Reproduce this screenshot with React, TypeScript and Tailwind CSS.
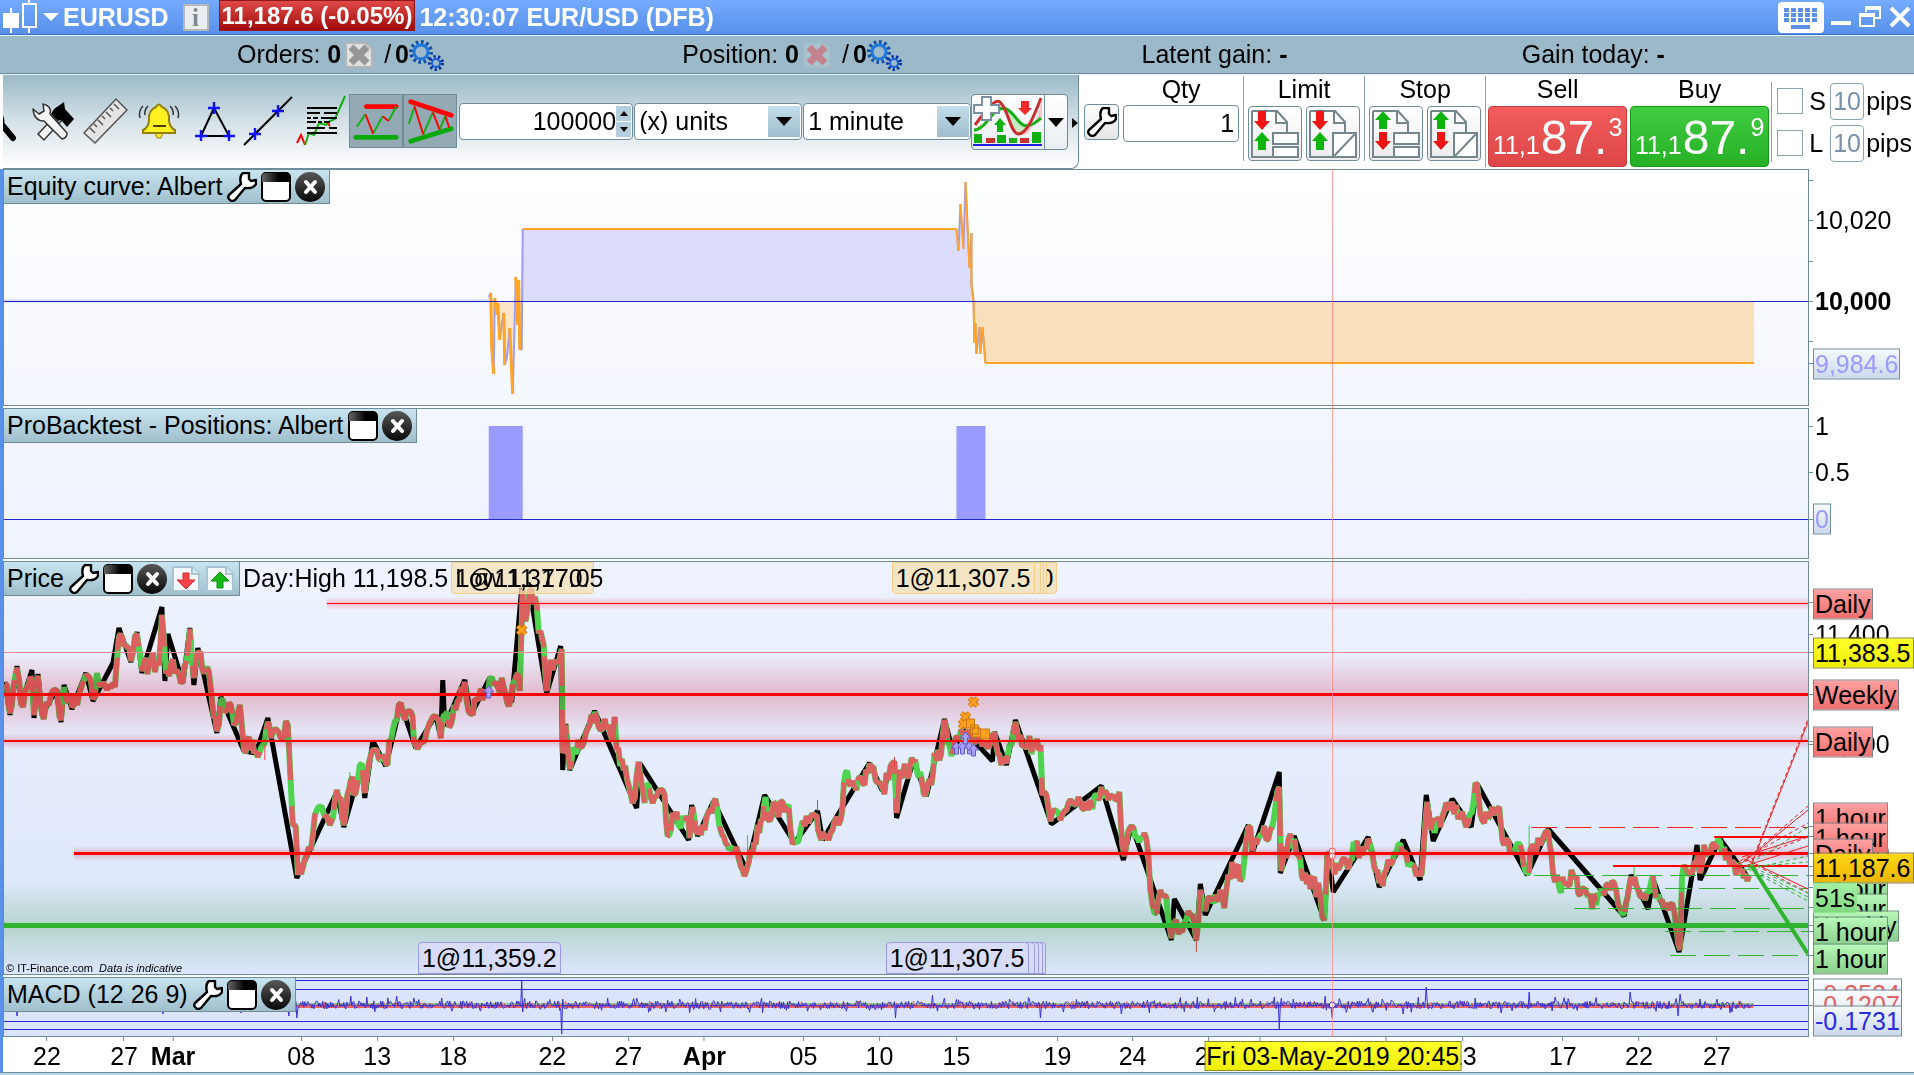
import React, { useState } from 'react';
import clsx from 'clsx';

type Point = [number, number];

// All panes share one horizontal scale: 3 is the left edge of the plot, 1808 the right one.
const PLOT_LEFT = 3;
const PLOT_WIDTH = 1805;

const pct = (x: number) => `${((x - PLOT_LEFT) / PLOT_WIDTH) * 100}%`;
const toPath = (points: Point[]) => 'M' + points.map(([x, y]) => `${x} ${y}`).join('L');

const zigzag: Point[] = [
  [4, 127], [9, 160], [16, 111], [20, 150], [31, 115], [33, 163], [37, 119], [41, 160], [55, 135], [60, 167],
  [63, 130], [71, 154], [85, 118], [92, 146], [112, 108], [118, 73], [130, 107], [136, 77], [141, 118], [161, 52],
  [164, 126], [167, 79], [182, 128], [189, 73], [193, 130], [197, 93], [216, 178], [220, 142], [243, 196], [255, 198],
  [267, 163], [296, 323], [336, 237], [343, 272], [361, 209], [364, 243], [372, 186], [385, 211], [400, 149], [415, 193],
  [435, 160], [440, 183], [442, 125], [444, 171], [464, 125], [470, 160], [489, 123], [511, 147], [521, 33], [524, 66],
  [529, 35], [546, 138], [560, 91], [562, 215], [565, 169], [569, 215], [594, 156], [636, 253], [639, 208], [688, 285],
  [691, 250], [697, 281], [713, 246], [746, 315], [764, 240], [794, 288], [817, 256], [822, 285], [869, 208], [882, 236],
  [894, 206], [896, 263], [913, 205], [926, 241], [944, 164], [952, 195], [964, 175], [992, 206], [994, 177], [1006, 210],
  [1015, 165], [1051, 269], [1101, 231], [1123, 305], [1131, 270], [1171, 385], [1174, 344], [1196, 385], [1200, 329], [1205, 360],
  [1248, 270], [1252, 298], [1279, 217], [1280, 318], [1294, 281], [1324, 365], [1328, 297], [1333, 337], [1368, 282], [1379, 332],
  [1403, 285], [1420, 325], [1426, 240], [1433, 286], [1452, 244], [1471, 272], [1477, 229], [1527, 320], [1548, 274], [1624, 361],
  [1631, 320], [1648, 354], [1653, 324], [1679, 397], [1697, 290], [1700, 325], [1720, 284], [1749, 324],
];

const prices: Point[] = [
  [4, 129], [9, 158], [16, 113], [20, 148], [26, 132], [31, 125], [33, 160], [37, 121], [41, 158], [48, 150],
  [55, 135], [60, 165], [63, 132], [71, 152], [78, 140], [85, 120], [92, 144], [96, 118], [102, 128], [108, 130],
  [114, 132], [118, 82], [125, 90], [130, 106], [136, 79], [141, 116], [150, 105], [158, 110], [161, 60], [165, 118],
  [170, 108], [182, 126], [185, 108], [189, 74], [193, 123], [198, 98], [203, 118], [208, 117], [213, 163], [216, 176],
  [220, 145], [226, 155], [230, 150], [235, 168], [239, 150], [243, 194], [248, 182], [255, 196], [262, 190], [267, 167],
  [270, 183], [276, 175], [281, 183], [287, 170], [289, 210], [292, 270], [295, 272], [297, 320], [302, 313], [306, 300],
  [312, 280], [316, 255], [319, 252], [324, 262], [329, 270], [334, 245], [340, 243], [343, 270], [350, 225], [355, 238],
  [361, 209], [364, 238], [370, 200], [374, 195], [380, 205], [385, 208], [392, 175], [398, 150], [404, 165], [410, 157],
  [415, 190], [424, 186], [432, 162], [438, 165], [440, 183], [443, 160], [450, 170], [455, 155], [464, 127], [470, 158],
  [476, 145], [484, 135], [489, 124], [495, 127], [503, 132], [510, 145], [516, 120], [519, 136], [522, 35], [525, 66],
  [529, 37], [536, 50], [538, 78], [543, 90], [546, 136], [550, 105], [557, 108], [561, 94], [562, 198], [565, 170],
  [569, 214], [574, 195], [583, 188], [589, 170], [594, 157], [600, 175], [608, 170], [612, 186], [614, 162], [616, 195],
  [623, 215], [628, 230], [634, 243], [636, 220], [638, 207], [642, 235], [644, 248], [648, 230], [652, 248], [660, 235],
  [664, 240], [667, 281], [672, 258], [678, 270], [686, 262], [689, 283], [692, 252], [697, 278], [702, 270], [706, 262],
  [713, 247], [720, 275], [725, 288], [732, 293], [738, 303], [746, 315], [752, 298], [757, 270], [762, 265], [765, 242],
  [769, 266], [773, 247], [778, 262], [782, 247], [788, 250], [790, 275], [794, 286], [800, 275], [808, 268], [816, 260],
  [819, 280], [824, 283], [830, 278], [836, 262], [840, 265], [845, 218], [850, 230], [856, 235], [860, 222], [864, 230],
  [869, 209], [875, 225], [882, 233], [888, 225], [894, 207], [896, 258], [899, 215], [906, 220], [913, 207], [918, 222],
  [925, 240], [931, 230], [934, 198], [939, 205], [944, 165], [949, 190], [953, 193], [957, 182], [964, 177], [972, 185],
  [980, 185], [988, 193], [994, 178], [999, 200], [1006, 208], [1011, 190], [1015, 167], [1020, 180], [1025, 192], [1033, 190],
  [1040, 190], [1042, 240], [1046, 240], [1050, 266], [1058, 258], [1068, 248], [1080, 247], [1088, 255], [1096, 240], [1101, 232],
  [1108, 245], [1113, 240], [1119, 237], [1122, 290], [1124, 301], [1131, 272], [1137, 282], [1144, 278], [1148, 300], [1150, 335],
  [1154, 358], [1158, 345], [1166, 342], [1171, 383], [1176, 365], [1180, 375], [1190, 360], [1196, 385], [1200, 335], [1205, 356],
  [1213, 348], [1220, 335], [1224, 353], [1228, 320], [1236, 312], [1242, 323], [1246, 285], [1250, 272], [1252, 296], [1260, 280],
  [1270, 275], [1279, 232], [1281, 316], [1288, 285], [1294, 284], [1300, 305], [1303, 325], [1312, 325], [1320, 340], [1324, 365],
  [1327, 297], [1331, 305], [1338, 315], [1350, 305], [1355, 290], [1362, 300], [1368, 284], [1374, 312], [1379, 328], [1386, 315],
  [1398, 290], [1406, 300], [1412, 310], [1420, 320], [1423, 300], [1427, 247], [1431, 275], [1436, 270], [1442, 262], [1452, 247],
  [1460, 260], [1468, 268], [1477, 230], [1482, 265], [1490, 260], [1499, 252], [1504, 290], [1512, 295], [1520, 290], [1527, 318],
  [1532, 290], [1540, 290], [1548, 277], [1553, 320], [1559, 332], [1566, 328], [1573, 320], [1580, 340], [1588, 342], [1596, 350],
  [1606, 330], [1616, 335], [1624, 358], [1631, 322], [1638, 335], [1645, 345], [1651, 327], [1658, 340], [1666, 348], [1674, 355],
  [1680, 395], [1682, 320], [1690, 318], [1698, 300], [1700, 318], [1704, 290], [1712, 290], [1720, 287], [1726, 305], [1734, 308],
  [1742, 315], [1749, 321],
];

const firstTrade: Point[] = [
  [488, 297], [490, 293], [491, 348], [493, 374], [494, 298], [496, 315], [497, 303], [499, 340], [501, 325], [503, 313],
  [504, 365], [506, 358], [508, 340], [509, 328], [512, 394], [514, 320], [515, 277], [517, 325], [518, 280], [519, 349],
  [521, 349], [522, 229],
];

const secondTrade: Point[] = [
  [956, 229], [958, 251], [960, 204], [963, 249], [965, 182], [969, 268], [971, 233], [971, 285], [973, 300], [974, 343],
  [975, 323], [976, 354], [979, 327], [980, 354], [982, 327], [985, 363],
];

// Losing stretches of an equity curve (y grows downwards)
const fallingPath = (points: Point[]) =>
  points
    .slice(1)
    .map(([x, y], i) => (y >= points[i][1] ? `M${points[i][0]} ${points[i][1]}L${x} ${y}` : ''))
    .join('');

// Bars of the MACD that stand out from the noise: x, and the height they reach
const macdSpikes: Record<number, number> = {
  16: 1016, 162: 1014, 240: 1013, 288: 1016, 296: 1018, 350: 996, 366: 997, 396: 996, 441: 998, 521: 981, 522: 1012, 561: 1034,
  562: 999, 636: 998, 665: 1012, 720: 1012, 761: 998, 820: 1010, 895: 1018, 932: 995, 944: 998, 1009: 999, 1040: 1018, 1121: 1014, 1149: 1013,
  1197: 997, 1242: 999, 1279: 1029, 1274: 997, 1293: 999, 1325: 996, 1332: 1018, 1372: 1012, 1382: 999, 1403: 1014, 1426: 987, 1475: 998,
  1501: 1013, 1529: 992, 1552: 1011, 1630: 992, 1678: 1016, 1680: 994, 1700: 999,
};

const createRandom = (seed: number) => () => {
  seed = (seed * 16807) % 2147483647;
  return seed / 2147483647;
};

const buildPricePath = () => {
  const random = createRandom(42);
  const out: Point[] = [prices[0]];
  for (let i = 1; i < prices.length; i++) {
    const [x0, y0] = prices[i - 1];
    const [x1, y1] = prices[i];
    const steps = Math.max(1, Math.round((x1 - x0) / 2));
    for (let s = 1; s < steps; s++) {
      const k = s / steps;
      out.push([x0 + (x1 - x0) * k, Math.round(y0 + (y1 - y0) * k + (random() - 0.5) * 20)]);
    }
    out.push([x1, y1]);
  }
  return toPath(out);
};

const buildMacdPath = (seed: number, size: number, spikes: Record<number, number>) => {
  const random = createRandom(seed);
  const out: Point[] = [];
  for (let x = 4; x <= 1753; x++) {
    const burst = random() > 0.88 ? 2 : 1;
    out.push([x, spikes[x] ?? Math.round((1005 + (random() - 0.5) * size * burst) * 10) / 10]);
  }
  return toPath(out);
};

const pricePath = buildPricePath();
const macdPath = buildMacdPath(7, 8, macdSpikes);
const signalPath = buildMacdPath(19, 4, {});

/* ---------- Icons ---------- */

const WrenchIcon = () => (
  <svg viewBox="0 0 30 30" className="size-[30px] shrink-0">
    <path d="M2 23L14 12Q12 4 16 1H22V7L24 9L29 8V12Q26 17 18 16L8 28Q5 30 3 28Q0 26 2 23Z" fill="#fff" stroke="#000" strokeWidth="2.4" strokeLinejoin="round" />
  </svg>
);

const WindowIcon = () => (
  <svg viewBox="0 0 30 30" className="size-[30px] shrink-0">
    <rect x="1" y="1" width="28" height="28" rx="4" fill="#fff" stroke="#000" strokeWidth="2" />
    <path d="M1 10V5Q1 1 5 1H25Q29 1 29 5V10Z" fill="url(#capFill)" />
  </svg>
);

const CloseIcon = () => (
  <svg viewBox="0 0 30 30" className="size-[30px] shrink-0">
    <circle cx="15" cy="15" r="15" fill="url(#closeFill)" />
    <path d="M11 10L20 20M20 10L11 20" stroke="#fff" strokeWidth="4" strokeLinecap="round" />
  </svg>
);

const PageArrowIcon = ({ up }: { up?: boolean }) => (
  <svg viewBox="0 0 30 28" className="h-7 w-[30px]">
    <path d="M2 2H21L28 9V26H2Z" fill="#f4fafc" stroke="#a9c4d4" strokeWidth="2" />
    <path d="M21 2V9H28" fill="#dcecf5" stroke="#a9c4d4" strokeWidth="2" />
    {up
      ? <path d="M15 7L24 16H18V23H12V16H6Z" fill="#16b816" stroke="#0a900a" />
      : <path d="M15 24L24 15H18V8H12V15H6Z" fill="#f4434b" stroke="#d82c34" />}
  </svg>
);

const GearsIcon = () => (
  <svg viewBox="0 0 36 32" className="h-8 w-9">
    <circle cx="12" cy="13" r="10" fill="none" stroke="#1450a8" strokeWidth="4" strokeDasharray="2.6 2.6" />
    <circle cx="12" cy="13" r="7" fill="none" stroke="#1f78dc" strokeWidth="3" />
    <circle cx="27" cy="24" r="6" fill="none" stroke="#0a2ea0" strokeWidth="4" strokeDasharray="2.1 2.1" />
    <circle cx="27" cy="24" r="4" fill="none" stroke="#1c62d6" strokeWidth="2" />
  </svg>
);

const DeletePageIcon = ({ red }: { red?: boolean }) => (
  <svg viewBox="0 0 28 28" className={clsx('size-7', red && 'opacity-60')}>
    <path d="M1 2H20L27 8V26H1Z" fill={red ? '#b4cbd8' : '#dfe0e1'} stroke={red ? '#a5bfce' : '#b4b4b4'} strokeWidth="2" />
    <path d="M6 6L22 22M22 6L6 22" stroke={red ? '#dc6068' : '#969696'} strokeWidth="7" />
  </svg>
);

const CandlesIcon = () => (
  <svg viewBox="0 0 36 34" className="h-[34px] w-9">
    <path d="M8 8V33M26 0V4M26 27V33" stroke="#fff" strokeWidth="2" />
    <rect x="0" y="13" width="16" height="15" fill="#fff" />
    <rect x="20" y="4" width="13" height="23" fill="none" stroke="#fff" strokeWidth="2" />
  </svg>
);

const ZoomIcon = () => (
  <svg viewBox="0 0 16 52" className="h-[52px] w-4">
    <path d="M0 20Q3 28 0 32" fill="#000" />
    <path d="M0 31L10 43" stroke="#000" strokeWidth="6" strokeLinecap="round" />
  </svg>
);

const ToolsIcon = () => (
  <svg viewBox="0 0 44 42" className="h-[42px] w-11">
    <path d="M7 34L25 15L31 20L13 40Z" fill="#f4f4f4" stroke="#333" strokeWidth="1.5" />
    <path d="M16 25L23 17L29 23L22 31Z" fill="#555" />
    <path d="M23 9L33 2L34 9L43 19L36 27L30 20L27 21L20 14Z" fill="#000" />
    <path d="M2 9L8 14L13 11L12 4Q21 6 19 14L36 33Q36 38 31 39L13 21Q3 21 2 9Z" fill="#f4f4f4" stroke="#333" strokeWidth="1.5" strokeLinejoin="round" />
  </svg>
);

const RulerIcon = () => (
  <svg viewBox="0 0 46 46" className="size-[46px]">
    <path d="M1 35L33 1L44 12L12 45Z" fill="#e4e4e4" stroke="#555" strokeWidth="1.5" strokeLinejoin="round" />
    <path d="M7 30L12 35M11 26L14 29M15 22L20 27M19 18L22 21M23 14L28 19M27 10L30 13M31 6L36 11" stroke="#555" strokeWidth="1.5" />
  </svg>
);

const BellIcon = () => (
  <svg viewBox="0 0 44 38" className="h-[38px] w-11">
    <path d="M6 4Q1 9 3 16M11 4Q7 8 8 13M38 4Q43 9 41 16M33 4Q37 8 36 13" fill="none" stroke="#333" strokeWidth="1.5" />
    <path d="M18 31H26L24 36H20Z" fill="#fce83a" stroke="#a08800" />
    <path d="M19 5Q22 0 25 5Q33 8 32 19Q33 26 38 28V31H6V28Q11 26 12 19Q11 8 19 5Z" fill="#fff024" stroke="#93800a" strokeWidth="2" />
    <path d="M16 24H29" stroke="#4a4000" strokeWidth="2" />
  </svg>
);

const TriangleIcon = () => (
  <svg viewBox="0 0 40 40" className="size-10">
    <path d="M19 7L6 35H34Z" fill="none" stroke="#000" strokeWidth="2" />
    <path d="M13 7H25M19 1V13M0 35H12M6 29V40M28 35H40M34 29V40" stroke="#1010ff" strokeWidth="2.4" />
  </svg>
);

const LineIcon = () => (
  <svg viewBox="0 0 50 52" className="h-[52px] w-[50px]">
    <path d="M1 50L49 2" stroke="#000" strokeWidth="2" />
    <path d="M29 16H41M35 10V22M6 39H18M12 33V45" stroke="#1010ff" strokeWidth="2.4" />
  </svg>
);

const ProfileIcon = () => (
  <svg viewBox="0 0 50 52" className="h-[52px] w-[50px]">
    <path d="M1 48L5 40L9 50" fill="none" stroke="#f00" strokeWidth="2" />
    <path d="M9 50L13 38L18 40L23 28L30 30L34 26L39 24L49 1" fill="none" stroke="#12b012" strokeWidth="2" />
    <path d="M30 26L34 31" stroke="#f00" strokeWidth="2" />
    <path d="M11 13H41M11 38H41" stroke="#000" strokeWidth="2" />
    <path d="M11 18H24M28 18H41M11 23H15M17 23H22M25 23H41M11 27H20M22 27H26M28 27H34M11 33H29M33 33H41" stroke="#000" strokeWidth="2" />
  </svg>
);

const HorizontalLinesIcon = () => (
  <svg viewBox="0 0 54 54" className="h-[52px] w-[52px]">
    <path d="M17 12H48" stroke="#f00" strokeWidth="5" strokeLinecap="round" />
    <path d="M6 44H48" stroke="#0aa80a" strokeWidth="5" strokeLinecap="round" />
    <path d="M7 33L16 20M24 40L34 22M40 27L48 12" stroke="#10b010" strokeWidth="2" />
    <path d="M16 20L24 40M34 22L40 27" stroke="#f00" strokeWidth="2" />
  </svg>
);

const TrendLinesIcon = () => (
  <svg viewBox="0 0 54 54" className="h-[52px] w-[52px]">
    <path d="M7 7L49 21" stroke="#f00" strokeWidth="5" strokeLinecap="round" />
    <path d="M7 48L49 35" stroke="#0aa80a" strokeWidth="5" strokeLinecap="round" />
    <path d="M5 30L11 12M20 41L30 18M37 36L43 22" stroke="#10b010" strokeWidth="2" />
    <path d="M11 12L20 41M30 18L37 36M43 22L47 34" stroke="#f00" strokeWidth="2" />
  </svg>
);

const IndicatorIcon = () => (
  <svg viewBox="0 0 70 52" className="h-[52px] w-[70px]">
    <path d="M1 34C16 34 20 4 33 13C46 22 45 42 69 24L69 3C60 42 47 50 39 24C30 -4 24 10 14 24Z" fill="#f8c8c8" />
    <path d="M33 13C42 18 45 32 54 30C48 42 42 38 33 13Z" fill="#c4ecc4" />
    <path d="M1 34C14 34 20 8 33 13C46 18 46 42 68 22" fill="none" stroke="#12b012" strokeWidth="3" />
    <path d="M2 29C13 14 22 2 27 6C36 15 37 36 45 38C54 38 61 20 68 2" fill="none" stroke="#c83030" strokeWidth="3" />
    <path d="M9 1H18V9H26V17H18V24H9V17H1V9H9Z" fill="#fff" stroke="#7890a0" strokeWidth="2" />
    <path d="M27 22L33 29H30V36H24V29H21Z" fill="#10b010" />
    <path d="M48 5H56V12H59L52 19L45 12H48Z" fill="#f02a2a" />
    <path d="M1 38H9V47H1ZM24 39H33V47H24ZM36 42H44V47H36ZM59 36H68V47H59Z" fill="#10b010" />
    <path d="M13 42H22V47H13ZM47 42H56V47H47Z" fill="#c83030" />
    <path d="M0 49H69" stroke="#2020e0" strokeWidth="2" />
  </svg>
);

const OrderIcon = ({ redFirst, slash }: { redFirst?: boolean; slash?: boolean }) => (
  <svg viewBox="0 0 50 52" className="h-[52px] w-[50px]">
    <path d="M2 3H27L37 14V27M24 49H2V3M26 3V15H37" fill="none" stroke="#75868c" strokeWidth="2" />
    {redFirst ? (
      <>
        <path d="M8 3H16V13H20L12 22L4 13H8Z" fill="#f01414" />
        <path d="M12 24L20 33H16V42H8V33H4Z" fill="#0cb40c" />
      </>
    ) : (
      <>
        <path d="M12 3L20 12H16V21H8V12H4Z" fill="#0cb40c" />
        <path d="M8 24H16V33H20L12 42L4 33H8Z" fill="#f01414" />
      </>
    )}
    {slash
      ? <path d="M25 25H48V49H25ZM26 48L47 26" fill="#fff" stroke="#75868c" strokeWidth="2" />
      : <path d="M23 25H48V36H23ZM23 39H48V49H23Z" fill="#fff" stroke="#75868c" strokeWidth="2" />}
  </svg>
);

// Gradients used by the icons above
const IconDefs = () => (
  <svg className="absolute size-0" aria-hidden="true">
    <defs>
      <linearGradient id="capFill">
        <stop offset="0" stopColor="#666" />
        <stop offset="0.6" stopColor="#000" />
      </linearGradient>
      <linearGradient id="closeFill" x1="0" y1="0" x2="0" y2="1">
        <stop offset="0" stopColor="#585858" />
        <stop offset="1" stopColor="#080808" />
      </linearGradient>
    </defs>
  </svg>
);

/* ---------- Shared pieces ---------- */

interface PaneHeaderProps {
  title: string;
  settings?: boolean;
  children?: React.ReactNode;
}

const PaneHeader: React.FC<PaneHeaderProps> = ({ title, settings, children }) => (
  <div className="absolute left-0 top-0 z-10 flex h-[34px] items-center gap-1 border-b border-r border-[#6f8d99] bg-gradient-to-b from-[#c8e4f0] to-[#a0bfcc] pl-[3px] pr-1">
    <h2 className="mr-px whitespace-nowrap">{title}</h2>
    {settings && <button aria-label={`${title} settings`}><WrenchIcon /></button>}
    <button aria-label={`Maximise ${title}`}><WindowIcon /></button>
    <button aria-label={`Close ${title}`}><CloseIcon /></button>
    {children}
  </div>
);

type Tone = 'plain' | 'bold' | 'red' | 'green' | 'timer' | 'yellow' | 'orange' | 'lilac' | 'blue' | 'rose';

interface AxisLabel {
  text: string;
  y: number;
  tone: Tone;
}

const toneClasses: Record<Tone, string> = {
  plain: 'border-transparent',
  bold: 'border-transparent font-bold',
  red: 'border-[#8a8088] bg-gradient-to-b from-[#ffa0a0] to-[#f07070]',
  green: 'border-[#6f9480] bg-gradient-to-b from-[#b8f8b8] to-[#8acc8a]',
  timer: 'border-transparent bg-gradient-to-b from-[#a4f0a4] to-[#80d880]',
  yellow: 'right-0 border-[#8a8a30] bg-gradient-to-b from-[#ffff28] to-[#eeee00]',
  orange: 'right-0 border-[#8a7a50] bg-gradient-to-b from-[#ffd818] to-[#ecb400]',
  lilac: 'border-[#6f8d99] bg-gradient-to-b from-[#f4fafc] to-[#ccd8ec] text-[#9a9aff]',
  blue: 'border-[#6f8d99] bg-gradient-to-b from-[#f4fafc] to-[#ccd8ec] text-[#2b2be0]',
  rose: 'border-[#6f8d99] bg-gradient-to-b from-[#fbfdfe] to-[#dde6f2] text-[#e06464]',
};

// y is the middle of the label, counted from the top of its pane
const PriceAxis = ({ labels, ticks }: { labels: AxisLabel[]; ticks: number[] }) => (
  <div className="relative w-[105px] shrink-0">
    {ticks.map((y) => (
      <span key={y} className="absolute left-0 h-px w-1 bg-[#6f8d99]" style={{ top: y }} />
    ))}
    {labels.map((label, i) => (
      <span
        key={i}
        className={clsx('absolute left-1 flex h-[31px] -translate-y-1/2 items-center whitespace-nowrap border px-px', toneClasses[label.tone])}
        style={{ top: label.y }}
      >
        {label.text}
      </span>
    ))}
  </div>
);

const tagTones = {
  exit: 'top-0 rounded-b border-[#f3cf85] bg-[#f3e5c4]',
  blend: 'top-0 rounded-b border-[#f3cf85] bg-[#f3dfb0]/70',
  entry: 'bottom-0 rounded-t border-[#9a9ae8] bg-[#d8dcf8]',
};

const TradeTag = ({ x, text, tone }: { x: number; text: string; tone: keyof typeof tagTones }) => (
  <span
    className={clsx('absolute flex h-8 w-[143px] items-center justify-center border', tagTones[tone])}
    style={{ left: pct(x) }}
  >
    {text}
  </span>
);

/* ---------- Top bars ---------- */

const TitleBar = () => (
  <header className="flex h-[35px] items-center border-b border-[#3a6fd4] bg-gradient-to-b from-[#74aaff] to-[#5890ea] font-bold text-white">
    <button aria-label="Instrument" className="flex items-center gap-1 pl-[3px]">
      <CandlesIcon />
      <svg viewBox="0 0 16 8" className="h-2 w-4"><path d="M0 0H16L8 8Z" fill="#fff" /></svg>
      <span>EURUSD</span>
    </button>
    <button aria-label="Information" className="ml-[14px] flex h-[27px] w-[26px] items-center justify-center border-2 border-[#b8b8b8] bg-[#e8eef2] font-['Liberation_Serif',serif] text-[#808890]">
      i
    </button>
    <span className="ml-[10px] flex h-[31px] items-center self-start border border-[#901818] bg-gradient-to-b from-[#e04848] to-[#a00404] px-[2px] text-2xl leading-none">
      11,187.6 (-0.05%)
    </span>
    <span className="ml-1">12:30:07 EUR/USD (DFB)</span>

    {/* Window controls */}
    <div className="ml-auto flex items-center gap-[6px] pr-[2px]">
      <button aria-label="Keyboard">
        <svg viewBox="0 0 46 31" className="h-[31px] w-[46px]">
          <rect width="46" height="31" rx="4" fill="#fff" />
          <path d="M6 8H39M6 13H39M6 18H39" stroke="#5a90e8" strokeWidth="4" strokeDasharray="5 2" />
          <path d="M13 25H32" stroke="#5a90e8" strokeWidth="4" />
        </svg>
      </button>
      <button aria-label="Minimise">
        <svg viewBox="0 0 22 24" className="h-6 w-[22px]"><path d="M1 18H21" stroke="#fff" strokeWidth="4" /></svg>
      </button>
      <button aria-label="Restore">
        <svg viewBox="0 0 24 24" className="size-6">
          <path d="M8 7V2H22V13H17M2 9H16V21H2Z" fill="none" stroke="#fff" strokeWidth="2" />
          <path d="M2 10H16M8 3H22" stroke="#fff" strokeWidth="4" />
        </svg>
      </button>
      <button aria-label="Close">
        <svg viewBox="0 0 24 24" className="size-6"><path d="M3 3L21 21M21 3L3 21" stroke="#fff" strokeWidth="4" /></svg>
      </button>
    </div>
  </header>
);

const StatusBar = () => (
  <div className="grid h-[39px] grid-cols-[445fr_459fr_380fr_392fr] items-center border-b border-t border-b-[#6f8d99] border-t-[#e4f2fa] bg-[#9bb9c8] pl-[237px]">
    <div className="flex items-center">
      Orders:&nbsp;<b>0</b>
      <button aria-label="Cancel orders" className="mx-1"><DeletePageIcon /></button>
      &nbsp;/<b className="ml-1">0</b>
      <button aria-label="Order systems"><GearsIcon /></button>
    </div>
    <div className="flex items-center">
      Position:&nbsp;<b>0</b>
      <button aria-label="Close position" className="mx-1"><DeletePageIcon red /></button>
      &nbsp;/<b className="ml-1">0</b>
      <button aria-label="Position systems"><GearsIcon /></button>
    </div>
    <div>Latent gain: <b>-</b></div>
    <div>Gain today: <b>-</b></div>
  </div>
);

const SelectBox = ({ label, options }: { label: string; options: string[] }) => (
  <div className="relative">
    <select aria-label={label} className="h-[37px] w-[168px] appearance-none rounded border border-[#6f8d99] bg-white pl-1">
      {options.map((option) => <option key={option}>{option}</option>)}
    </select>
    <span className="pointer-events-none absolute bottom-[3px] right-[2px] top-[3px] flex w-8 items-center justify-center bg-gradient-to-b from-[#c4deea] to-[#9dbccb]">
      <svg viewBox="0 0 16 9" className="h-[9px] w-4"><path d="M0 0H16L8 9Z" /></svg>
    </span>
  </div>
);

const Quote = ({ side, last }: { side: 'Sell' | 'Buy'; last: string }) => (
  <div className="flex w-[139px] flex-col items-center gap-1">
    <span className="h-[26px] leading-[26px]">{side}</span>
    <button
      aria-label={side}
      className={clsx(
        'flex h-[61px] w-full items-end justify-center gap-px rounded-sm border pb-2 leading-none text-white',
        side === 'Sell' ? 'border-[#c83c3c] bg-gradient-to-b from-[#f25c5c] to-[#dc4646]' : 'border-[#149a14] bg-gradient-to-b from-[#40cc40] to-[#26b026]',
      )}
    >
      <span>11,1</span>
      <span className="text-5xl leading-[40px]">87.</span>
      <span className="self-start pt-2">{last}</span>
    </button>
  </div>
);

const OrderPair = ({ label, redFirst }: { label: string; redFirst?: boolean }) => (
  <div className="flex flex-col items-center gap-1 border-l border-[#8aa4b0] px-1">
    <span className="h-[26px] leading-[26px]">{label}</span>
    <div className="flex gap-1">
      <button aria-label={`${label} order`} className="flex h-[55px] w-[54px] items-center justify-center rounded border border-[#6f8d99] bg-gradient-to-b from-white to-[#ececec]">
        <OrderIcon redFirst={redFirst} />
      </button>
      <button aria-label={`${label} order with distance`} className="flex h-[55px] w-[54px] items-center justify-center rounded border border-[#6f8d99] bg-gradient-to-b from-white to-[#ececec]">
        <OrderIcon redFirst={redFirst} slash />
      </button>
    </div>
  </div>
);

const PipsRow = ({ id }: { id: string }) => (
  <div className="flex h-[38px] items-center">
    <input id={`use-${id}`} type="checkbox" className="size-[26px] appearance-none border border-[#8aa4b0] bg-white checked:bg-[#9bb9c8]" />
    <label htmlFor={`use-${id}`} className="ml-[6px] w-[21px]">{id}</label>
    <input id={`pips-${id}`} aria-label={`${id} distance`} defaultValue="10" className="h-[37px] w-[34px] rounded border border-[#8aa4b0] bg-white text-center text-[#7890a8]" />
    <label htmlFor={`pips-${id}`} className="ml-[2px]">pips</label>
  </div>
);

const Toolbar = () => {
  const [quantity, setQuantity] = useState(100000);

  return (
    <div className="flex h-[95px] border-t border-[#e4f2fa] bg-white pl-[3px]">
      <div className="flex flex-1 items-start rounded-br-lg border-b border-r border-[#6f8d99] bg-gradient-to-b from-[#9bbac8] via-[#d5e1e7] to-white pt-[19px]">
        {/* Drawing tools */}
        <div className="flex h-[54px] flex-1 items-center gap-2">
          <button aria-label="Zoom" className="mr-1"><ZoomIcon /></button>
          <button aria-label="Tools"><ToolsIcon /></button>
          <button aria-label="Ruler"><RulerIcon /></button>
          <button aria-label="Alerts"><BellIcon /></button>
          <button aria-label="Triangle" className="ml-[6px]"><TriangleIcon /></button>
          <div className="flex gap-[3px]">
            <button aria-label="Line"><LineIcon /></button>
            <button aria-label="Profile"><ProfileIcon /></button>
            <div className="flex">
              <button aria-label="Horizontal levels" className="border border-[#708c98] bg-[#93a9b4]"><HorizontalLinesIcon /></button>
              <button aria-label="Trend lines" className="border border-[#708c98] bg-[#93a9b4]"><TrendLinesIcon /></button>
            </div>
          </div>
        </div>

        {/* Chart period */}
        <div className="mt-[9px] flex gap-px">
          <div className="flex h-[37px] w-[174px] items-center rounded border border-[#6f8d99] bg-white pr-px">
            <input
              aria-label="Quantity of units"
              className="w-full min-w-0 text-right outline-none"
              value={quantity}
              onChange={(e) => setQuantity(Number(e.target.value) || 0)}
            />
            <div className="flex w-[15px] shrink-0 flex-col gap-px">
              <button aria-label="More" onClick={() => setQuantity(quantity + 1)} className="flex h-[15px] items-center justify-center bg-[#b4d0de]">
                <svg viewBox="0 0 8 5" className="h-[5px] w-2"><path d="M0 5H8L4 0Z" /></svg>
              </button>
              <button aria-label="Fewer" onClick={() => setQuantity(quantity - 1)} className="flex h-[15px] items-center justify-center bg-[#b4d0de]">
                <svg viewBox="0 0 8 5" className="h-[5px] w-2"><path d="M0 0H8L4 5Z" /></svg>
              </button>
            </div>
          </div>
          <SelectBox label="Unit type" options={['(x) units', '(x) days']} />
          <SelectBox label="Timeframe" options={['1 minute', '1 hour', 'Daily']} />
        </div>
        <div className="flex h-14 rounded border border-[#6f8d99] bg-gradient-to-b from-white to-[#e8eef2]">
          <button aria-label="Add indicator" className="w-[73px] border-r border-[#6f8d99] pl-px"><IndicatorIcon /></button>
          <button aria-label="Indicator menu" className="flex w-[22px] items-center justify-center">
            <svg viewBox="0 0 16 9" className="h-[9px] w-4"><path d="M0 0H16L8 9Z" /></svg>
          </button>
        </div>
        <svg viewBox="0 0 6 10" className="ml-1 mt-6 h-[10px] w-[6px]"><path d="M0 0V10L6 5Z" /></svg>
      </div>

      {/* Trading */}
      <div className="flex items-start pl-[5px] pr-[2px] pt-[1px]">
        <button aria-label="Trading settings" className="mt-[28px] flex h-9 w-[35px] items-center justify-center rounded border border-[#6f8d99] bg-gradient-to-b from-white to-[#e4e4e4]">
          <WrenchIcon />
        </button>
        <div className="ml-1 mr-1 flex w-[116px] flex-col items-center gap-[3px]">
          <label htmlFor="qty" className="h-[26px] leading-[26px]">Qty</label>
          <input id="qty" defaultValue="1" className="h-[37px] w-full rounded border border-[#6f8d99] bg-white pr-1 text-right" />
        </div>
        <OrderPair label="Limit" redFirst />
        <OrderPair label="Stop" />
        <div className="flex gap-[3px] border-l border-[#8aa4b0] px-[2px]">
          <Quote side="Sell" last="3" />
          <Quote side="Buy" last="9" />
        </div>
        <div className="mt-[6px] flex flex-col gap-1 border-l border-[#8aa4b0] pl-[5px]">
          <PipsRow id="S" />
          <PipsRow id="L" />
        </div>
      </div>
    </div>
  );
};

/* ---------- Panes ---------- */

const paneClass = 'relative flex-1 overflow-hidden border border-[#6f8d99]';

const EquityPane = () => (
  <section className="flex h-[237px]">
    <div className={clsx(paneClass, 'bg-gradient-to-b from-white to-[#f4f7fe]')}>
      <PaneHeader title="Equity curve: Albert" settings />
      <svg viewBox="3 170 1805 235" preserveAspectRatio="none" className="size-full">
        <path d={toPath([[522, 301], [522, 229], ...secondTrade.slice(0, 9), [973, 301]])} fill="#dcdcfd" />
        <path d={toPath([[973, 301], ...secondTrade.slice(9), [1754, 363], [1754, 301]])} fill="#f9dfbc" />
        <path d={toPath([[488, 301], ...firstTrade, [522, 301]])} fill="#fbe4c8" />
        <path d="M3 301H488" stroke="#d4d8fb" strokeWidth="3" />
        <path d={toPath(firstTrade)} fill="none" stroke="#9a9aff" strokeWidth="2" />
        <path d={fallingPath(firstTrade)} fill="none" stroke="#ffa426" strokeWidth="3" />
        <path d="M522 229H956" stroke="#ffa426" strokeWidth="2" />
        <path d={toPath(secondTrade)} fill="none" stroke="#b09ad0" strokeWidth="2" />
        <path d={fallingPath(secondTrade)} fill="none" stroke="#ffa426" strokeWidth="2" />
        <path d="M985 363H1754" stroke="#ffa426" strokeWidth="2" />
        <path d="M3 301.5H1808" stroke="#2424c8" strokeWidth="1" />
      </svg>
    </div>
    <PriceAxis
      ticks={[11, 51, 92, 132, 172, 194]}
      labels={[
        { text: '10,020', y: 51, tone: 'plain' },
        { text: '10,000', y: 132, tone: 'bold' },
        { text: '9,984.6', y: 195, tone: 'lilac' },
      ]}
    />
  </section>
);

const PositionsPane = () => (
  <section className="flex h-[151px]">
    <div className={clsx(paneClass, 'bg-gradient-to-b from-[#f3f6fe] to-[#eff3fe]')}>
      <PaneHeader title="ProBacktest - Positions: Albert" />
      <svg viewBox="3 409 1805 149" preserveAspectRatio="none" className="size-full">
        <path d="M488 426H522V519H488ZM956 426H985V519H956Z" fill="#9a9aff" />
        <path d="M3 519.5H1808" stroke="#2424d8" strokeWidth="1" />
      </svg>
    </div>
    <PriceAxis
      ticks={[18, 64, 111]}
      labels={[
        { text: '1', y: 18, tone: 'plain' },
        { text: '0.5', y: 64, tone: 'plain' },
        { text: '0', y: 111, tone: 'lilac' },
      ]}
    />
  </section>
);

const priceLabels: AxisLabel[] = [
  { text: '11,400', y: 73, tone: 'plain' },
  { text: '11,300', y: 183, tone: 'plain' },
  { text: '11,200', y: 292, tone: 'plain' },
  { text: 'Daily', y: 43, tone: 'red' },
  { text: '11,383.5', y: 92, tone: 'yellow' },
  { text: 'Weekly', y: 134, tone: 'red' },
  { text: 'Daily', y: 181, tone: 'red' },
  { text: '1 hour', y: 257, tone: 'red' },
  { text: '1 hour', y: 277, tone: 'red' },
  { text: 'Daily', y: 293, tone: 'red' },
  { text: '1 hour', y: 328, tone: 'green' },
  { text: '1 hour', y: 348, tone: 'green' },
  { text: 'Weekly', y: 365, tone: 'green' },
  { text: '11,187.6', y: 307, tone: 'orange' },
  { text: '51s', y: 337, tone: 'timer' },
  { text: '1 hour', y: 371, tone: 'green' },
  { text: '1 hour', y: 398, tone: 'green' },
];

const crossMarks: Point[] = [[521, 75], [973, 147], [965, 162], [963, 169]];
const entryArrows: Point[] = [[488, 131], [956, 187], [962, 187], [965, 177], [969, 187], [973, 189]];

const PricePane = () => (
  <section className="flex h-[414px]">
    <div className={clsx(paneClass, 'bg-gradient-to-b from-[#eff3ff] to-[#dbe5fb]')}>
      <PaneHeader title="Price" settings>
        <button aria-label="Sell marker"><PageArrowIcon /></button>
        <button aria-label="Buy marker"><PageArrowIcon up /></button>
      </PaneHeader>

      <svg viewBox="3 7 1805 412" preserveAspectRatio="none" className="size-full">
        <defs>
          <linearGradient id="redZone" x1="0" y1="0" x2="0" y2="1">
            <stop offset="0" stopColor="#f08090" stopOpacity="0" />
            <stop offset="0.5" stopColor="#f08090" stopOpacity="0.45" />
            <stop offset="1" stopColor="#f08090" stopOpacity="0" />
          </linearGradient>
          <linearGradient id="greenZone" x1="0" y1="0" x2="0" y2="1">
            <stop offset="0" stopColor="#90d090" stopOpacity="0" />
            <stop offset="0.5" stopColor="#90d090" stopOpacity="0.42" />
            <stop offset="1" stopColor="#90d090" stopOpacity="0" />
          </linearGradient>
        </defs>
        <rect x="326" y="42" width="1482" height="13" fill="url(#redZone)" />

        {/* Zigzag, then the candles over it */}
        <path d={toPath(zigzag)} fill="none" stroke="#000" strokeWidth="5" strokeLinejoin="bevel" />
        <path d={pricePath} fill="none" stroke="#50d450" strokeWidth="6" strokeLinejoin="bevel" />
        <path d={pricePath} fill="none" stroke="#dc6262" strokeWidth="5" strokeLinejoin="bevel" strokeDasharray="64 7 92 20 22 9 140 24 81 5 38 26" />
        <path d="M264 190V205M817 245V256M1196 385V397M894 202V212" stroke="#e84040" strokeWidth="1" />
        <path d="M349 217V226M747 280V305M1529 271V290M1634 312V322M1687 311V320" stroke="#40c840" strokeWidth="1" />

        <g className="mix-blend-multiply">
          <rect x="3" y="97" width="1805" height="86" fill="url(#redZone)" />
          <rect x="3" y="178" width="1805" height="16" fill="url(#redZone)" />
          <rect x="73" y="291" width="1735" height="15" fill="url(#redZone)" />
          <rect x="3" y="325" width="1805" height="92" fill="url(#greenZone)" />
        </g>

        <path d="M326 48.5H1808" stroke="#f00" strokeWidth="1" />
        <path d="M3 97.5H1808" stroke="#f08890" strokeWidth="1" />
        <path d="M3 139.5H1808M73 298.5H1808" stroke="#f00" strokeWidth="3" />
        <path d="M3 186H1808" stroke="#f00" strokeWidth="2" />
        <path d="M3 370.5H1808" stroke="#30b430" strokeWidth="5" />

        {/* Hourly levels */}
        <path d="M1531 272.5H1808" stroke="#f02020" strokeWidth="1" strokeDasharray="26 8" />
        <path d="M1714 282H1808M1613 311H1808" stroke="#f00" strokeWidth="2" />
        <path d="M1534 320.5H1808M1563 333.5H1808M1574 353.5H1808M1665 376.5H1808M1670 400.5H1808" stroke="#30b430" strokeWidth="1" strokeDasharray="26 8" />

        {/* Forecast fan */}
        <path d="M1752 308L1808 167M1745 306L1808 255M1742 302L1808 281M1735 314L1808 291M1745 304L1808 334" fill="none" stroke="#f01c1c" strokeWidth="1" />
        <path d="M1752 306L1808 164M1742 308L1808 251M1740 306L1808 268M1738 309L1808 282M1744 304L1808 338" fill="none" stroke="#f01c1c" strokeWidth="1" strokeDasharray="4 3" />
        <path d="M1745 312L1808 272M1745 315L1808 301M1750 312L1808 307M1748 310L1808 338M1748 312L1808 342M1748 314L1808 346" fill="none" stroke="#30b430" strokeWidth="1" strokeDasharray="4 3" />
        <path d="M1751 310L1808 399" stroke="#30b430" strokeWidth="4" />

        {/* Trades */}
        {crossMarks.map(([x, y]) => (
          <g key={`${x}-${y}`}>
            <path d={`M${x - 4} ${y - 4}l8 8m0 -8l-8 8`} stroke="#c87814" strokeWidth="5" />
            <path d={`M${x - 4} ${y - 4}l8 8m0 -8l-8 8`} stroke="#ffa020" strokeWidth="3" />
          </g>
        ))}
        <path d="M966 164h8v9h-8zM970 170h8v9h-8zM972 173h8v9h-8zM980 174h9v10h-9z" fill="#ffa020" stroke="#c87814" />
        {entryArrows.map(([x, y]) => (
          <path key={x} d={`M${x} ${y}l5 6h-3v6h-4v-6h-3z`} fill="#a8a0f8" stroke="#6058c8" />
        ))}
        <g fill="#fff" stroke="#e05050">
          <circle cx="1332" cy="296" r="3" />
          <circle cx="1332" cy="301" r="3" />
        </g>
      </svg>

      <TradeTag x={450} text="1@11,377.0" tone="blend" />
      <p className="absolute left-[239px] top-[2px] flex h-7 items-center whitespace-pre">Day:High 11,198.5 Low 11,170.5</p>

      {[[914, '1@11,322.0'], [903, ''], [900, ''], [897, ''], [891, '1@11,307.5']].map(([x, text]) => (
        <TradeTag key={x} x={Number(x)} text={String(text)} tone="exit" />
      ))}
      <TradeTag x={417} text="1@11,359.2" tone="entry" />
      {[[902, ''], [899, ''], [895, ''], [891, ''], [885, '1@11,307.5']].map(([x, text]) => (
        <TradeTag key={x} x={Number(x)} text={String(text)} tone="entry" />
      ))}
      <small className="absolute bottom-0 left-[2px] text-[11px] leading-[11px]">
        © IT-Finance.com&nbsp; <i>Data is indicative</i>
      </small>
    </div>
    <PriceAxis ticks={[41, 73, 91, 133, 180, 183, 265, 275, 292, 305, 314, 326, 346, 364, 370, 394]} labels={priceLabels} />
  </section>
);

const MacdPane = () => (
  <section className="flex h-[60px]">
    <div className={clsx(paneClass, 'bg-[#dbe4fb]')}>
      <PaneHeader title="MACD (12 26 9)" settings />
      <svg viewBox="3 978 1805 58" preserveAspectRatio="none" className="size-full">
        <path d="M3 980.5H1808M3 989.5H1808M3 1005.5H1808M3 1021.5H1808M3 1029.5H1808" stroke="#2626d8" strokeWidth="1" />
        <path d="M4 1007H1753" stroke="#f06464" strokeWidth="2" />
        <path d="M4 1004H1753" stroke="#30b430" strokeWidth="1" />
        <path d={signalPath} fill="none" stroke="#e06464" strokeWidth="1" />
        <path d={macdPath} fill="none" stroke="#3a30d8" strokeWidth="1" />
        <circle cx="1332" cy="1005" r="3" fill="#fff" stroke="#3a30d8" />
      </svg>
    </div>
    <PriceAxis
      ticks={[28]}
      labels={[
        { text: '-0.3524', y: 17, tone: 'rose' },
        { text: '-0.1207', y: 28, tone: 'rose' },
        { text: '-0.1731', y: 44, tone: 'blue' },
      ]}
    />
  </section>
);

const dates: [number, string][] = [
  [47, '22'], [124, '27'], [173, 'Mar'], [301, '08'], [377, '13'], [453, '18'], [552, '22'], [628, '27'], [704, 'Apr'], [803, '05'],
  [879, '10'], [956, '15'], [1057, '19'], [1132, '24'], [1208, '29'], [1259, ''], [1385, ''], [1462, '13'], [1562, '17'], [1638, '22'], [1716, '27'],
];

const TimeAxis = () => (
  <div className="relative mr-[105px] h-[35px]">
    {dates.map(([x, text]) => (
      <span
        key={x}
        className={clsx('absolute top-0 flex -translate-x-1/2 flex-col items-center gap-[2px]', text.length > 2 && 'font-bold')}
        style={{ left: pct(x) }}
      >
        <span className="h-1 w-px bg-[#6f8d99]" />
        <span className="leading-[26px]">{text}</span>
      </span>
    ))}
    <time
      dateTime="2019-05-03T20:45"
      className="absolute top-[4px] flex h-[30px] -translate-x-1/2 items-center whitespace-nowrap border border-[#8a8a30] bg-gradient-to-b from-[#ffff28] to-[#eeee00] px-px"
      style={{ left: pct(1332) }}
    >
      Fri 03-May-2019 20:45
    </time>
  </div>
);

const App: React.FC = () => (
  <div className="min-h-screen min-w-[1400px] overflow-hidden bg-white font-['Liberation_Sans',Arial,sans-serif] text-[25px] leading-none text-black">
    <IconDefs />
    <TitleBar />
    <StatusBar />
    <Toolbar />
    <main className="flex flex-col border-b border-l-[3px] border-b-[#6f8d99] border-l-[#5890ea]">
      <div className="relative flex flex-col gap-[2px]">
        <EquityPane />
        <PositionsPane />
        <PricePane />
        <MacdPane />
        <div className="pointer-events-none absolute inset-y-0 left-0 right-[105px]">
          <div className="absolute inset-y-0 w-px bg-[#ff8c8c]/80" style={{ left: pct(1331) }} />
        </div>
      </div>
      <TimeAxis />
    </main>
    <div className="h-[3px] bg-[#b4d4e4]" />
  </div>
);

export default App;
